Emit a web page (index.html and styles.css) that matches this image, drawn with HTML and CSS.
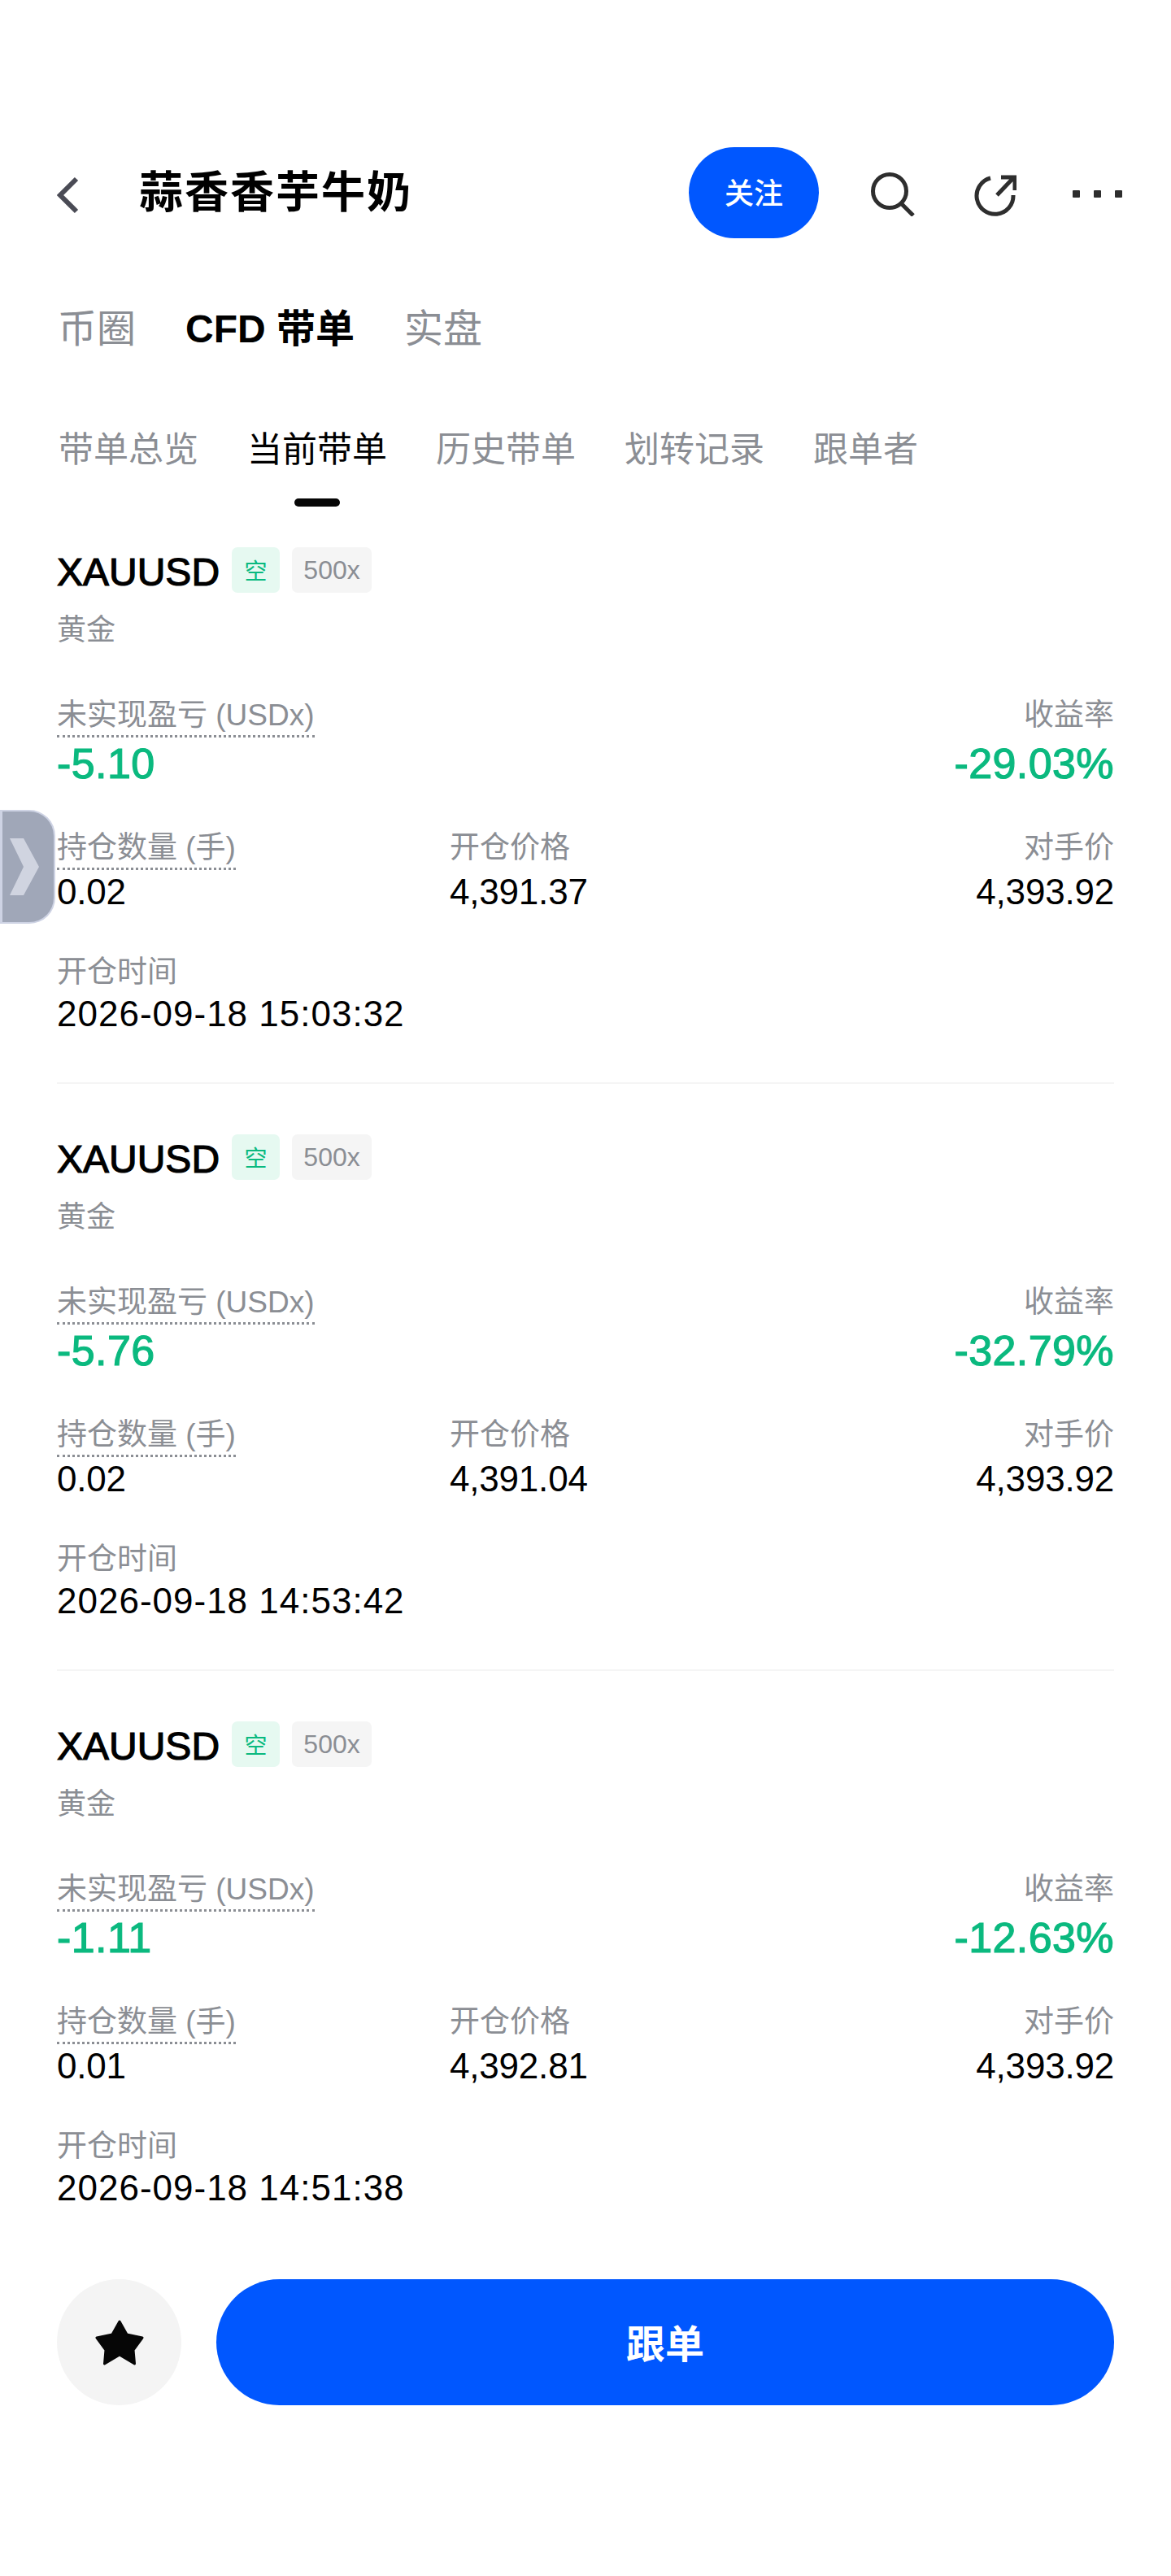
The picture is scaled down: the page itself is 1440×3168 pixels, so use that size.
FILE: index.html
```html
<!DOCTYPE html>
<html lang="zh-CN">
<head>
    <meta charset="UTF-8">
    <meta name="viewport" content="width=device-width, initial-scale=1.0">
    <title>蒜香香芋牛奶</title>
    <link rel="stylesheet" href="styles.css">
</head>
<body>
    <div class="page">
        <div class="side-handle">
            <svg width="36" height="70" viewBox="0 0 36 70"><path d="M0 0H17L36 35L17 70H0L17 35Z" fill="#d0d4e0"/></svg>
        </div>

        <div class="topbar">
            <svg class="back-icon" width="27" height="46" viewBox="0 0 27 46"><path d="M24 3L4 23L24 43" fill="none" stroke="#4a4b55" stroke-width="6"/></svg>
            <h1 class="title">蒜香香芋牛奶</h1>
            <button class="follow-btn">关注</button>
            <svg class="search-icon" width="54" height="54" viewBox="0 0 54 54"><circle cx="23" cy="23" r="20.500" fill="none" stroke="#2e2e2e" stroke-width="5"/><path d="M38 39L52 53" fill="none" stroke="#2e2e2e" stroke-width="5"/></svg>
            <svg class="share-icon" width="52" height="52" viewBox="0 0 52 52"><path d="M20 5A22.500 22.500 0 1 0 48 26" fill="none" stroke="#2e2e2e" stroke-width="5"/><path d="M28 26L48 5M33 4H50V20" fill="none" stroke="#2e2e2e" stroke-width="5"/></svg>
            <div class="more-icon"><span></span><span></span><span></span></div>
        </div>

        <div class="product-tabs">
            <div class="product-tab">币圈</div>
            <div class="product-tab active">CFD 带单</div>
            <div class="product-tab">实盘</div>
        </div>

        <div class="sub-tabs">
            <div class="sub-tab">带单总览</div>
            <div class="sub-tab active">当前带单</div>
            <div class="sub-tab">历史带单</div>
            <div class="sub-tab">划转记录</div>
            <div class="sub-tab">跟单者</div>
        </div>

        <div class="order-list">
            <div class="order-item">
                <div class="order-head">
                    <span class="symbol">XAUUSD</span>
                    <span class="tag tag-short">空</span>
                    <span class="tag tag-lever">500x</span>
                </div>
                <div class="symbol-name">黄金</div>
                <div class="pnl-row">
                    <div>
                        <div class="label"><span class="dotted">未实现盈亏 (USDx)</span></div>
                        <div class="pnl">-5.10</div>
                    </div>
                    <div class="right">
                        <div class="label">收益率</div>
                        <div class="pnl">-29.03%</div>
                    </div>
                </div>
                <div class="price-row">
                    <div>
                        <div class="label"><span class="dotted">持仓数量 (手)</span></div>
                        <div class="value">0.02</div>
                    </div>
                    <div>
                        <div class="label">开仓价格</div>
                        <div class="value">4,391.37</div>
                    </div>
                    <div class="right">
                        <div class="label">对手价</div>
                        <div class="value">4,393.92</div>
                    </div>
                </div>
                <div class="time-row">
                    <div class="label">开仓时间</div>
                    <div class="value time">2026-09-18 15:03:32</div>
                </div>
            </div>

            <div class="order-item">
                <div class="order-head">
                    <span class="symbol">XAUUSD</span>
                    <span class="tag tag-short">空</span>
                    <span class="tag tag-lever">500x</span>
                </div>
                <div class="symbol-name">黄金</div>
                <div class="pnl-row">
                    <div>
                        <div class="label"><span class="dotted">未实现盈亏 (USDx)</span></div>
                        <div class="pnl">-5.76</div>
                    </div>
                    <div class="right">
                        <div class="label">收益率</div>
                        <div class="pnl">-32.79%</div>
                    </div>
                </div>
                <div class="price-row">
                    <div>
                        <div class="label"><span class="dotted">持仓数量 (手)</span></div>
                        <div class="value">0.02</div>
                    </div>
                    <div>
                        <div class="label">开仓价格</div>
                        <div class="value">4,391.04</div>
                    </div>
                    <div class="right">
                        <div class="label">对手价</div>
                        <div class="value">4,393.92</div>
                    </div>
                </div>
                <div class="time-row">
                    <div class="label">开仓时间</div>
                    <div class="value time">2026-09-18 14:53:42</div>
                </div>
            </div>

            <div class="order-item">
                <div class="order-head">
                    <span class="symbol">XAUUSD</span>
                    <span class="tag tag-short">空</span>
                    <span class="tag tag-lever">500x</span>
                </div>
                <div class="symbol-name">黄金</div>
                <div class="pnl-row">
                    <div>
                        <div class="label"><span class="dotted">未实现盈亏 (USDx)</span></div>
                        <div class="pnl">-1.11</div>
                    </div>
                    <div class="right">
                        <div class="label">收益率</div>
                        <div class="pnl">-12.63%</div>
                    </div>
                </div>
                <div class="price-row">
                    <div>
                        <div class="label"><span class="dotted">持仓数量 (手)</span></div>
                        <div class="value">0.01</div>
                    </div>
                    <div>
                        <div class="label">开仓价格</div>
                        <div class="value">4,392.81</div>
                    </div>
                    <div class="right">
                        <div class="label">对手价</div>
                        <div class="value">4,393.92</div>
                    </div>
                </div>
                <div class="time-row">
                    <div class="label">开仓时间</div>
                    <div class="value time">2026-09-18 14:51:38</div>
                </div>
            </div>
        </div>

        <div class="bottom-bar">
            <div class="star-btn">
                <svg width="60" height="56" viewBox="0 0 60 56"><path d="M30 2L39 18L58 22L47 37L48.500 54L30 43L11.500 54L13 37L2 22L21 18Z" fill="#060606" stroke="#060606" stroke-width="3" stroke-linejoin="round"/></svg>
            </div>
            <button class="copy-btn">跟单</button>
        </div>
    </div>
</body>
</html>
```
FILE: styles.css
```css
* {
    box-sizing: border-box;
}
body {
    margin: 0;
    font-family: "Liberation Sans", "Noto Sans CJK SC", sans-serif;
    background-color: #fff;
    color: #000;
}
.page {
    position: relative;
    width: 1440px;
    height: 3168px;
    padding-top: 181px;
}
/* 左侧悬浮把手 */
.side-handle {
    position: absolute;
    top: 996px;
    left: 0;
    width: 68px;
    height: 140px;
    display: flex;
    align-items: center;
    padding-left: 9px;
    background-color: #a0a7b8;
    border: 2px solid #ced3e4;
    border-left-width: 3px;
    border-radius: 0 32px 32px 0;
}
.topbar {
    display: flex;
    align-items: center;
    height: 112px;
    padding: 0 60px 0 70px;
}
.back-icon,
.share-icon {
    margin-top: 6px;
}
.title {
    margin: 0 0 0 74px;
    font-size: 54px;
    line-height: 60px;
    font-weight: 700;
    letter-spacing: 2px;
}
.follow-btn {
    margin-left: auto;
    width: 160px;
    height: 112px;
    padding-bottom: 6px;
    border: none;
    border-radius: 56px;
    background-color: #0057ff;
    color: #fff;
    font-family: inherit;
    font-size: 36px;
    font-weight: 500;
}
.search-icon {
    margin-left: 64px;
    margin-top: 3px;
}
.share-icon {
    margin-left: 73px;
}
.more-icon {
    display: flex;
    gap: 17px;
    margin-left: 69px;
    margin-top: 3px;
}
.more-icon span {
    width: 9px;
    height: 9px;
    background-color: #2e2e2e;
    border-radius: 1px;
}
.product-tabs {
    display: flex;
    gap: 61px;
    margin-top: 82px;
    padding-left: 71px;
}
.product-tab {
    font-size: 48px;
    line-height: 60px;
    color: #8b8e94;
}
.product-tab.active {
    color: #000;
    font-weight: 700;
}
.sub-tabs {
    display: flex;
    gap: 60px;
    margin-top: 90px;
    padding-left: 72px;
}
.sub-tab {
    position: relative;
    font-size: 43px;
    line-height: 56px;
    color: #8b8e94;
}
.sub-tab.active {
    color: #000;
}
.sub-tab.active::after {
    content: '';
    position: absolute;
    left: 50%;
    top: 88px;
    width: 56px;
    height: 10px;
    margin-left: -28px;
    border-radius: 5px;
    background-color: #060606;
}
.order-list {
    margin-top: 92px;
    padding: 0 70px;
}
.order-item {
    padding-bottom: 58px;
    margin-bottom: 62px;
    border-bottom: 2px solid #f5f5f5;
}
.order-item:last-child {
    padding-bottom: 0;
    margin-bottom: 0;
    border-bottom: none;
}
.order-head {
    display: flex;
    align-items: center;
    height: 56px;
}
.symbol {
    font-size: 48px;
    -webkit-text-stroke: 1.200px #000;
    line-height: 56px;
    margin-right: 15px;
    transform: translateY(3px);
}
.tag {
    display: flex;
    align-items: center;
    justify-content: center;
    height: 56px;
    border-radius: 7px;
    margin-right: 15px;
}
.tag-short {
    width: 59px;
    font-size: 28px;
    color: #0bb97f;
    background-color: #e6f9f1;
}
.tag-lever {
    width: 98px;
    font-size: 32px;
    color: #8b8e94;
    background-color: #f5f5f5;
}
.symbol-name {
    margin-top: 22px;
    font-size: 36px;
    line-height: 48px;
    color: #8b8e94;
}
.label {
    height: 51px;
    font-size: 37px;
    line-height: 48px;
    color: #8b8e94;
}
.time-row .label {
    height: 48px;
}
.dotted {
    display: inline-block;
    height: 51px;
    border-bottom: 3px dotted #8b8e94;
}
.right {
    text-align: right;
}
.pnl-row {
    display: flex;
    justify-content: space-between;
    margin-top: 57px;
}
.pnl {
    margin-top: 4px;
    font-size: 52px;
    line-height: 56px;
    letter-spacing: 0.400px;
    color: #0bb97f;
    -webkit-text-stroke: 1.200px #0bb97f;
}
.price-row {
    display: grid;
    grid-template-columns: 483px 1fr 1fr;
    margin-top: 52px;
}
.value {
    margin-top: 1px;
    font-size: 44px;
    line-height: 52px;
    letter-spacing: -0.200px;
}
.time-row {
    margin-top: 49px;
}
.value.time {
    letter-spacing: 1px;
}
.bottom-bar {
    display: flex;
    gap: 43px;
    margin-top: 86px;
    padding: 0 70px;
}
.star-btn {
    display: flex;
    align-items: center;
    justify-content: center;
    flex: none;
    width: 153px;
    height: 155px;
    border-radius: 50%;
    background-color: #f4f4f4;
}
.copy-btn {
    flex: 1;
    height: 155px;
    padding-bottom: 4px;
    border: none;
    border-radius: 78px;
    background-color: #0057ff;
    color: #fff;
    font-family: inherit;
    font-size: 48px;
    font-weight: 700;
}
```
